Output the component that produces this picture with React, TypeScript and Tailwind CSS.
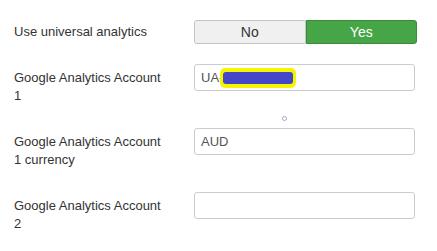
import React from 'react';

function Label({ children, center }: { children: React.ReactNode; center?: boolean }) {
    return (
        <div className={`w-[180px] shrink-0 pr-4 leading-[18px] ${center ? '' : 'pt-[5px]'}`}>
            {children}
        </div>
    );
}

function TextInput({ children }: { children?: React.ReactNode }) {
    return (
        <div className="w-[221px] h-[27px] border border-[#cccccc] rounded-[3px] bg-white flex items-center px-[6px] text-[#555555]">
            {children}
        </div>
    );
}

export default function App() {
    return (
        <div
            className="w-[437px] h-[251px] bg-white text-[13px] text-[#333333] pl-[14px] pt-[20px]"
            style={{ fontFamily: '"Liberation Sans", Arial, sans-serif' }}
        >
            <div className="flex items-center h-[24px] mb-[20px]">
                <Label center>Use universal analytics</Label>
                <div className="flex w-[223px] h-[24px]">
                    <div className="flex-1 flex items-center justify-center bg-[#f0f0f0] border border-[#c4c4c4] rounded-l-[3px] text-[#333333] text-[14px]">
                        No
                    </div>
                    <div className="flex-1 flex items-center justify-center bg-[#46a546] border border-[#3b8b3b] rounded-r-[3px] text-white text-[14px]">
                        Yes
                    </div>
                </div>
            </div>

            <div className="relative flex items-start h-[41px] mb-[23px]">
                <Label>
                    Google Analytics Account
                    <br />1
                </Label>
                <TextInput>
                    <span>UA-</span>
                    <span className="-ml-[3px] inline-block w-[76px] h-[20px] bg-[#f5f500] rounded-[5px] px-[3px] py-[4px]">
                        <span className="block w-full h-full bg-[#4646c8] rounded-[3px]" />
                    </span>
                </TextInput>
                <span className="absolute left-[268px] top-[52px] w-[5px] h-[5px] rounded-full border border-[#a8a8c4]" />
            </div>

            <div className="flex items-start h-[41px] mb-[23px]">
                <Label>
                    Google Analytics Account
                    <br />1 currency
                </Label>
                <TextInput>AUD</TextInput>
            </div>

            <div className="flex items-start h-[41px]">
                <Label>
                    Google Analytics Account
                    <br />2
                </Label>
                <TextInput />
            </div>
        </div>
    );
}
